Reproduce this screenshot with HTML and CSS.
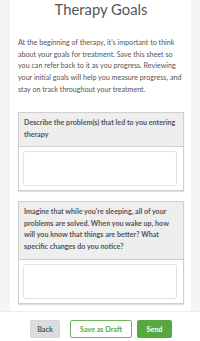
FILE: index.html
```html
<!DOCTYPE html>
<html>
<head>
<meta charset="utf-8">
<link rel="stylesheet" href="styles.css">
</head>
<body>
<div class="page">
  <main class="column">
    <h1 class="title">Therapy Goals</h1>
    <p class="intro">At the beginning of therapy, it's important to think about your goals for treatment. Save this sheet so you can refer back to it as you progress. Reviewing your initial goals will help you measure progress, and stay on track throughout your treatment.</p>
    <section class="card">
      <div class="card-head">Describe the problem(s) that led to you entering therapy</div>
      <div class="card-body"><div class="answer"></div></div>
    </section>
    <section class="card card-second">
      <div class="card-head">Imagine that while you're sleeping, all of your problems are solved. When you wake up, how will you know that things are better? What specific changes do you notice?</div>
      <div class="card-body"><div class="answer"></div></div>
    </section>
  </main>
  <footer class="footer">
    <button class="btn btn-back">Back</button>
    <button class="btn btn-draft">Save as Draft</button>
    <button class="btn btn-send">Send</button>
  </footer>
</div>
</body>
</html>
```
FILE: styles.css
```css
* { box-sizing: border-box; }
html, body { margin: 0; padding: 0; }
body {
  background: #f4f4f4;
  font-family: Lato, "Open Sans", sans-serif;
  color: #555;
  width: 200px;
  height: 341px;
  overflow: hidden;
}
.page {
  display: flex;
  flex-direction: column;
  height: 341px;
}
.column {
  background: #fff;
  margin: 0 9px 0 10px;
  padding: 0 7px 0 8px;
  height: 311px;
  overflow: hidden;
}
.title {
  margin: 0;
  padding-top: 0;
  font-size: 14.8px;
  line-height: 18px;
  font-weight: 400;
  text-align: center;
  color: #555;
}
.intro {
  margin: 19px 0 0;
  font-size: 7.15px;
  line-height: 11.7px;
  color: #555;
}
.card {
  margin-top: 16px;
  border: 1px solid #cfcfcf;
  box-shadow: 0 1px 1px rgba(0,0,0,0.12);
}
.card-second { margin-top: 10px; }
.card-head {
  background: #eeeeee;
  border-bottom: 1px solid #cfcfcf;
  padding: 4.5px 4px 6px 5px;
  font-size: 7.15px;
  line-height: 11.7px;
  font-weight: 700;
  color: #555;
}
.card-second .card-head { padding: 3.5px 4px 6.5px 5px; }
.card-body {
  padding: 4px 6px 4px 4px;
}
.answer {
  height: 35px;
  border: 1px solid #e3e3e3;
  border-radius: 3px;
  background: #fff;
}
.footer {
  flex: 1;
  background: #fff;
  border-top: 1px solid #ececec;
  display: flex;
  align-items: flex-start;
  justify-content: center;
  padding-top: 8px;
  padding-left: 2px;
}
.btn {
  font-family: Lato, "Open Sans", sans-serif;
  font-size: 7.2px;
  font-weight: 700;
  height: 18px;
  border-radius: 2px;
  padding: 0;
  border: 1px solid transparent;
  cursor: pointer;
}
.btn-back {
  width: 30px;
  background: #dcdcdc;
  color: #555;
  border-color: #d6d6d6;
}
.btn-draft {
  width: 62px;
  margin-left: 10px;
  background: #fff;
  color: #5aac44;
  border-color: #6cb75a;
}
.btn-send {
  width: 35px;
  margin-left: 5px;
  background: #57a83f;
  border-color: #57a83f;
  color: #fff;
}
```
